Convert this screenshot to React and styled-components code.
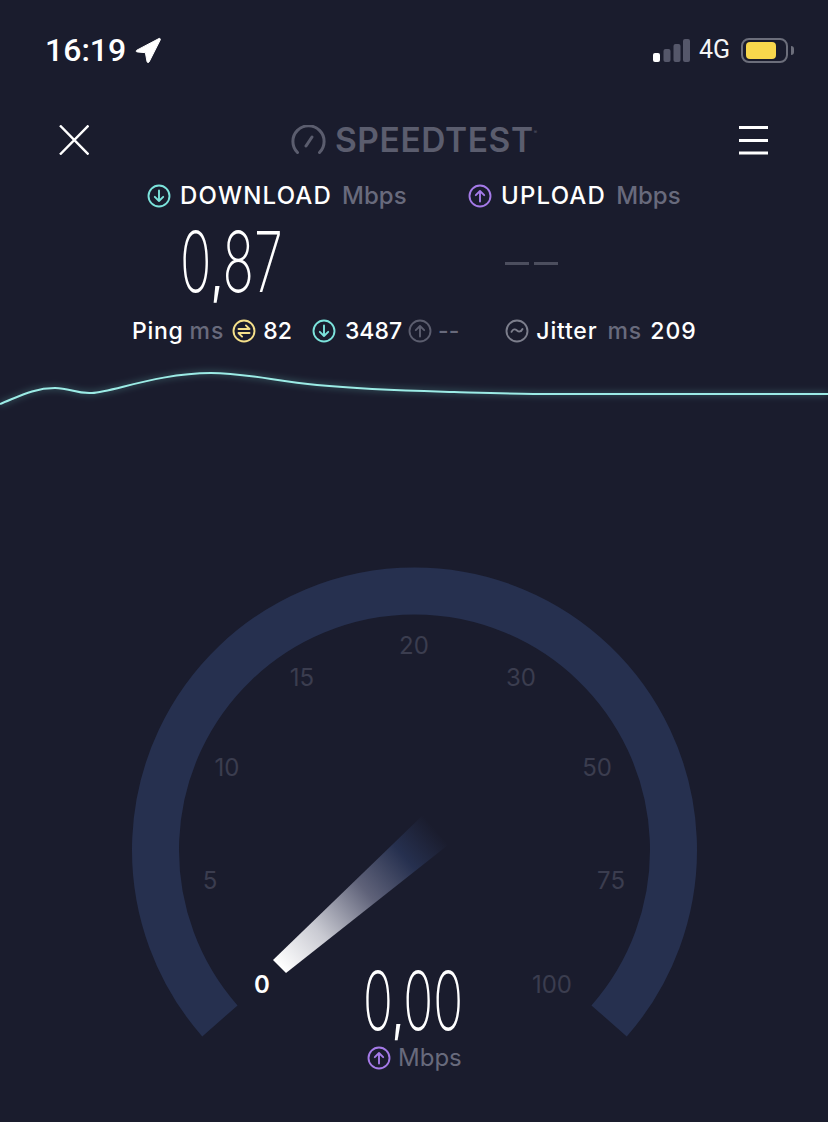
import React from "react";
import styled, { createGlobalStyle } from "styled-components";

const Global = createGlobalStyle`
  html, body { margin: 0; padding: 0; background: #1a1c2d; }
  #root { width: 828px; height: 1122px; overflow: hidden; }
`;

const Page = styled.div`
  width: 828px;
  height: 1122px;
  background: #1a1c2d;
  color: #fff;
  font-family: Inter, "Liberation Sans", sans-serif;
  overflow: hidden;
`;

const StatusBar = styled.div`
  height: 100px;
  box-sizing: border-box;
  padding: 34px 34px 0 45px;
  display: flex;
  justify-content: space-between;
  align-items: flex-start;
`;
const StatusGroup = styled.div`
  display: flex;
  align-items: center;
  height: 32px;
`;
const Time = styled.span`
  font: 500 32px/32px Roboto, sans-serif;
  color: #fff;
  margin-right: 9px;
`;
const Network = styled.span`
  font: 400 25px/32px Roboto, sans-serif;
  color: #f4f4f6;
  margin: 0 11px 0 9px;
`;
const BatteryShell = styled.div`
  width: 47px;
  height: 25px;
  box-sizing: border-box;
  border: 2px solid #6c6e7b;
  border-radius: 8px;
  padding: 2px 10px 2px 3px;
`;
const BatteryFill = styled.div`
  height: 100%;
  background: #f8d74c;
  border-radius: 4px;
`;
const BatteryNub = styled.div`
  width: 3px;
  height: 9px;
  margin-left: 3px;
  background: #6c6e7b;
  border-radius: 0 3px 3px 0;
`;

const Header = styled.div`
  height: 80px;
  box-sizing: border-box;
  padding: 0 60px 0 59px;
  display: flex;
  justify-content: space-between;
  align-items: center;
`;
const Logo = styled.div`
  display: flex;
  align-items: center;
  gap: 9px;
  margin-left: 0;
`;
const LogoText = styled.span`
  font: 600 33.5px/40px Inter, sans-serif;
  color: #5b5d6e;
  letter-spacing: 0.6px;
`;
const LogoMark = styled.sup`
  font-size: 5px;
  line-height: 1;
  align-self: flex-start;
  margin: 10px 0 0 -9px;
  color: #5b5d6e;
`;

const LabelRow = styled.div`
  height: 32px;
  padding-left: 147px;
  display: grid;
  grid-template-columns: 321px auto;
  align-items: center;
`;
const Label = styled.div`
  display: flex;
  align-items: center;
`;
const LabelName = styled.span`
  font: 500 24px/32px Inter, sans-serif;
  letter-spacing: 1.2px;
  color: #fff;
  margin-left: 9px;
`;
const Unit = styled.span`
  font: 500 24px/32px Inter, sans-serif;
  color: #686a7c;
  margin-left: 10px;
`;

const Readings = styled.div`
  height: 103px;
  padding-left: 180px;
  display: grid;
  grid-template-columns: 325px auto;
  align-items: center;
`;
const ThinNumber = styled.span`
  display: block;
  font: 200 ${(p) => p.$size ?? 84}px/0.85 Inter, sans-serif;
  color: #fff;
  margin-top: -3px;
  transform-origin: left center;
  transform: scaleX(${(p) => p.$stretch ?? 0.62});
  white-space: nowrap;
`;
const Comma = styled.span`
  font-weight: 500;
  font-size: 0.7em;
`;
const Dashes = styled.div`
  display: flex;
  gap: 5px;
`;
const Dash = styled.div`
  width: 24px;
  height: 3px;
  background: #4c4e5e;
`;

const StatsRow = styled.div`
  height: 32px;
  padding-left: 132px;
  display: flex;
  align-items: center;
`;
const Stat = styled.span`
  font: 500 23px/32px Inter, sans-serif;
  color: ${(p) => (p.$muted ? "#686a7c" : "#fff")};
  letter-spacing: ${(p) => p.$spread ?? 0}px;
  margin-left: ${(p) => p.$gap ?? 0}px;
  margin-right: ${(p) => p.$after ?? 0}px;
`;

const ChartWrap = styled.div`
  height: 70px;
  margin-top: 3px;
`;
const Chart = styled.svg`
  display: block;
`;

const GaugeArea = styled.div`
  position: relative;
  margin-top: 140px;
  height: 552px;
`;
const GaugeSvg = styled.svg`
  display: block;
`;
const GaugeNum = styled.text`
  font: 400 24px Inter, sans-serif;
  fill: ${(p) => (p.$active ? "#fff" : "#3b3d4f")};
  font-weight: ${(p) => (p.$active ? 600 : 400)};
  text-anchor: middle;
  dominant-baseline: central;
`;
const Readout = styled.div`
  position: absolute;
  left: 363px;
  top: 410px;
  display: flex;
  flex-direction: column;
`;
const ReadoutUnit = styled.div`
  display: flex;
  align-items: center;
  margin-top: 6px;
  margin-left: 4px;
`;
const ReadoutText = styled.span`
  font: 400 24px/32px Inter, sans-serif;
  color: #686a7c;
  margin-left: 7px;
`;

const CircleIcon = ({ color, kind = "down" }) => (
  <svg width="24" height="24" viewBox="0 0 24 24" fill="none" stroke={color} strokeWidth="1.9" strokeLinecap="round" strokeLinejoin="round">
    <circle cx="12" cy="12" r="10.5" />
    {kind === "down" && <path d="M12 6.5v10.5M7.8 12.8l4.2 4.2 4.2-4.2" />}
    {kind === "up" && <path d="M12 17.5V7M7.8 11.2 12 7l4.2 4.2" />}
    {kind === "ping" && <path d="M6.5 10h11l-3.6-3.6M17.5 14H6.5l3.6 3.6" />}
    {kind === "wave" && <path d="M6.5 12.8c1.5-3 3.6-3 5.5-1.4s4 1.6 5.5-1.4" />}
  </svg>
);

const Signal = () => (
  <svg width="37" height="24" viewBox="0 0 37 24">
    <rect x="0" y="15" width="7" height="9" rx="2" fill="#fff" />
    <rect x="10.5" y="11" width="7" height="13" rx="2" fill="#55576a" />
    <rect x="20.5" y="6" width="7" height="18" rx="2" fill="#55576a" />
    <rect x="30" y="1" width="7" height="23" rx="2" fill="#55576a" />
  </svg>
);

const needleStops = [
  ["0%", "#fff", 1],
  ["25%", "#c9cad2", 1],
  ["55%", "#5f6279", 1],
  ["80%", "#26304f", 1],
  ["100%", "#26304f", 0],
];

const ticks = [
  ["20", 414, 85], ["15", 302, 117], ["30", 521, 117],
  ["10", 227, 207], ["50", 597, 207], ["5", 210, 320],
  ["75", 611, 320], ["100", 552, 424],
];

const LINE = "M0 404C20 396 34 388 55 388C70 388 76 394 92 393C112 392 160 373 211 373C245 373 275 381 317 385C370 390 420 391 454 392C490 393 520 394 554 394C640 394 740 394 828 394";

export default function App() {
  return (
    <Page>
      <Global />
      <StatusBar>
        <StatusGroup>
          <Time>16:19</Time>
          <svg width="26" height="26" viewBox="0 0 26 26">
            <path d="M24 1.5 1.8 13.2c-1 .6-.7 1.7.4 1.7l8.2.8 1.6 8.9c.2 1.2 1.6 1.3 2.1.3L25.3 2.8c.4-.9-.4-1.7-1.3-1.3Z" fill="#fff" stroke="#fff" strokeWidth="1" strokeLinejoin="round" />
          </svg>
        </StatusGroup>
        <StatusGroup>
          <Signal />
          <Network>4G</Network>
          <BatteryShell><BatteryFill /></BatteryShell>
          <BatteryNub />
        </StatusGroup>
      </StatusBar>

      <Header>
        <svg width="30" height="30" viewBox="0 0 30 30" stroke="#fff" strokeWidth="2.4">
          <path d="M1 .5 29.5 29.5M29.5.5 1 29.5" />
        </svg>
        <Logo>
          <svg width="35" height="30" viewBox="0 0 35 30" fill="none" stroke="#5b5d6e" strokeWidth="3" strokeLinecap="round">
            <path d="M6.5 27.5A15.6 15.6 0 1 1 28.5 27.5" />
            <path d="M15 21 21 12" />
          </svg>
          <LogoText>SPEEDTEST</LogoText>
          <LogoMark>®</LogoMark>
        </Logo>
        <svg width="29" height="30" viewBox="0 0 29 30" stroke="#fff" strokeWidth="3">
          <path d="M0 2.5h29M0 15.5h29M0 28h29" />
        </svg>
      </Header>

      <LabelRow>
        <Label>
          <CircleIcon color="#7ce3dc" kind="down" />
          <LabelName>DOWNLOAD</LabelName>
          <Unit>Mbps</Unit>
        </Label>
        <Label>
          <CircleIcon color="#a57ae8" kind="up" />
          <LabelName>UPLOAD</LabelName>
          <Unit>Mbps</Unit>
        </Label>
      </LabelRow>

      <Readings>
        <ThinNumber>0<Comma>,</Comma>87</ThinNumber>
        <Dashes><Dash /><Dash /></Dashes>
      </Readings>

      <StatsRow>
        <Stat $spread={0.7}>Ping</Stat>
        <Stat $muted $gap={6} $after={8} $spread={1}>ms</Stat>
        <CircleIcon color="#f5e08a" kind="ping" />
        <Stat $gap={7} $after={20}>82</Stat>
        <CircleIcon color="#7ce3dc" kind="down" />
        <Stat $gap={9} $after={6}>3487</Stat>
        <CircleIcon color="#5b5d6e" kind="up" />
        <Stat $muted $gap={6} $after={46}>--</Stat>
        <CircleIcon color="#7c7e8c" kind="wave" />
        <Stat $gap={7} $spread={0.8}>Jitter</Stat>
        <Stat $muted $gap={10} $spread={1}>ms</Stat>
        <Stat $gap={8} $spread={1}>209</Stat>
      </StatsRow>

      <ChartWrap>
        <Chart width="828" height="70" viewBox="0 350 828 70" fill="none">
          <defs>
            <filter id="glow" x="-5%" y="-100%" width="110%" height="300%">
              <feGaussianBlur stdDeviation="3" />
            </filter>
          </defs>
          <path d={LINE} stroke="#7fe8df" strokeOpacity="0.35" strokeWidth="3" filter="url(#glow)" />
          <path d={LINE} stroke="#9cece6" strokeWidth="2" />
        </Chart>
      </ChartWrap>

      <GaugeArea>
        <GaugeSvg width="828" height="552" viewBox="0 560 828 552" fill="none">
          <defs>
            <linearGradient id="needle" gradientUnits="userSpaceOnUse" x1="280" y1="966" x2="436" y2="830">
              {needleStops.map(([o, c, a]) => (
                <stop key={o} offset={o} stopColor={c} stopOpacity={a} />
              ))}
            </linearGradient>
          </defs>
          <path d="M219.9 1020.9A259 259 0 1 1 609.1 1020.9" stroke="#26304f" strokeWidth="47" />
          <path d="M273 960 423 815 448 845 286 973Z" fill="url(#needle)" />
          <g transform="translate(0 560)">
            {ticks.map(([t, x, y]) => (
              <GaugeNum key={t} x={x} y={y}>{t}</GaugeNum>
            ))}
            <GaugeNum $active x={262} y={424}>0</GaugeNum>
          </g>
        </GaugeSvg>
        <Readout>
          <ThinNumber $size={81} $stretch={0.61}>0<Comma>,</Comma>00</ThinNumber>
          <ReadoutUnit>
            <CircleIcon color="#a57ae8" kind="up" />
            <ReadoutText>Mbps</ReadoutText>
          </ReadoutUnit>
        </Readout>
      </GaugeArea>
    </Page>
  );
}
